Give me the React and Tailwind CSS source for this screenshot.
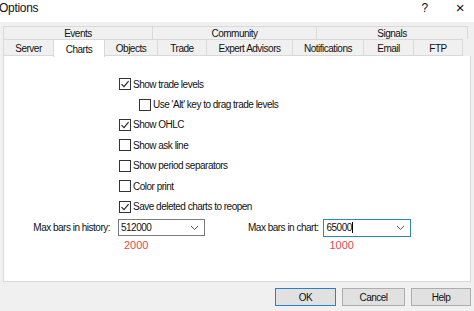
import React from "react";

const Check = ({ checked }) => (
  <span className="w-[12px] h-[12px] border border-[#333] bg-white flex items-center justify-center shrink-0">
    {checked && (
      <svg width="10" height="10" viewBox="0 0 10 10">
        <path d="M1.5 5.2 L4 7.6 L8.6 2.2" fill="none" stroke="#222" strokeWidth="1.1" />
      </svg>
    )}
  </span>
);

const Option = ({ checked, label, indent }) => (
  <div className={`h-[20.4px] flex items-center gap-[2px] ${indent ? "pl-[135px]" : "pl-[115px]"}`}>
    <Check checked={checked} />
    <span>{label}</span>
  </div>
);

const Chevron = () => (
  <svg width="9" height="6" viewBox="0 0 9 6">
    <path d="M1 1 L4.5 4.5 L8 1" fill="none" stroke="#555" strokeWidth="1" />
  </svg>
);

export default function App() {
  const top = [
    ["Events", 150],
    ["Community", 165],
    ["Signals", 152],
  ];
  const tabs = [
    ["Server", 51],
    ["Charts", 52],
    ["Objects", 54],
    ["Trade", 50],
    ["Expert Advisors", 87],
    ["Notifications", 72],
    ["Email", 51],
    ["FTP", 50],
  ];

  return (
    <div
      className="w-[474px] h-[311px] overflow-hidden bg-[#f0f0f0] text-[10px] tracking-[-0.5px] text-[#111] flex flex-col"
      style={{ fontFamily: '"Liberation Sans", Arial, sans-serif' }}
    >
      {/* title bar */}
      <div className="h-[22px] bg-white flex items-center shrink-0">
        <span className="text-[12px] tracking-[-0.3px] -ml-[1px] pb-[6px]">Options</span>
        <span className="ml-auto text-[12px] pb-[6px]">?</span>
        <span className="ml-[28px] mr-[10px] text-[15px] pb-[6px] font-light">×</span>
      </div>

      <div className="px-[3px] pt-[4px] flex flex-col">
        {/* first tab row */}
        <div className="flex h-[13px]">
          {top.map(([t, w]) => (
            <div
              key={t}
              style={{ width: w }}
              className="border-t border-l border-r border-[#d9d9d9] -mr-[1px] flex items-center justify-center bg-[#f0f0f0]"
            >
              {t}
            </div>
          ))}
        </div>
        {/* second tab row */}
        <div className="flex h-[17px]">
          {tabs.map(([t, w]) =>
            t === "Charts" ? (
              <div
                key={t}
                style={{ width: w }}
                className="bg-white border-t border-l border-r border-[#d9d9d9] -mr-[1px] flex items-start justify-center pt-[2px] relative z-10 h-[18px]"
              >
                {t}
              </div>
            ) : (
              <div
                key={t}
                style={{ width: w }}
                className="border border-[#d9d9d9] -mr-[1px] flex items-center justify-center pt-[2px] bg-[#f0f0f0]"
              >
                {t}
              </div>
            )
          )}
        </div>

        {/* panel */}
        <div className="h-[226px] bg-white border border-[#d9d9d9] border-t-0 flex flex-col pt-[18px]">
          <Option checked label="Show trade levels" />
          <Option indent label="Use 'Alt' key to drag trade levels" />
          <Option checked label="Show OHLC" />
          <Option label="Show ask line" />
          <Option label="Show period separators" />
          <Option label="Color print" />
          <Option checked label="Save deleted charts to reopen" />

          <div className="flex items-center h-[18px] mt-[2px]">
            <span className="w-[114px] text-right pr-[8px]">Max bars in history:</span>
            <div className="w-[87px] h-[17px] border border-[#7a7a7a] flex items-center pl-[2px] pr-[5px]">
              <span>512000</span>
              <span className="ml-auto">
                <Chevron />
              </span>
            </div>
            <span className="ml-[43px] pr-[5px]">Max bars in chart:</span>
            <div className="w-[88px] h-[18px] border border-[#2b88b8] flex items-center pl-[2px] pr-[5px]">
              <span>65000</span>
              <span className="w-[1px] h-[11px] bg-black"></span>
              <span className="ml-auto">
                <Chevron />
              </span>
            </div>
          </div>
          <div className="flex h-[14px] text-[11px] tracking-normal text-[#e2474f]">
            <span className="ml-[120px]">2000</span>
            <span className="ml-[181px]">1000</span>
          </div>
        </div>

        {/* buttons */}
        <div className="flex justify-end gap-[6px] pt-[6px]">
          <button className="w-[61px] h-[18px] bg-[#e1e1e1] border border-[#2a7fd4] flex items-center justify-center">
            OK
          </button>
          <button className="w-[63px] h-[18px] bg-[#e1e1e1] border border-[#adadad] flex items-center justify-center">
            Cancel
          </button>
          <button className="w-[60px] h-[18px] bg-[#e1e1e1] border border-[#adadad] flex items-center justify-center">
            Help
          </button>
        </div>
      </div>
    </div>
  );
}
